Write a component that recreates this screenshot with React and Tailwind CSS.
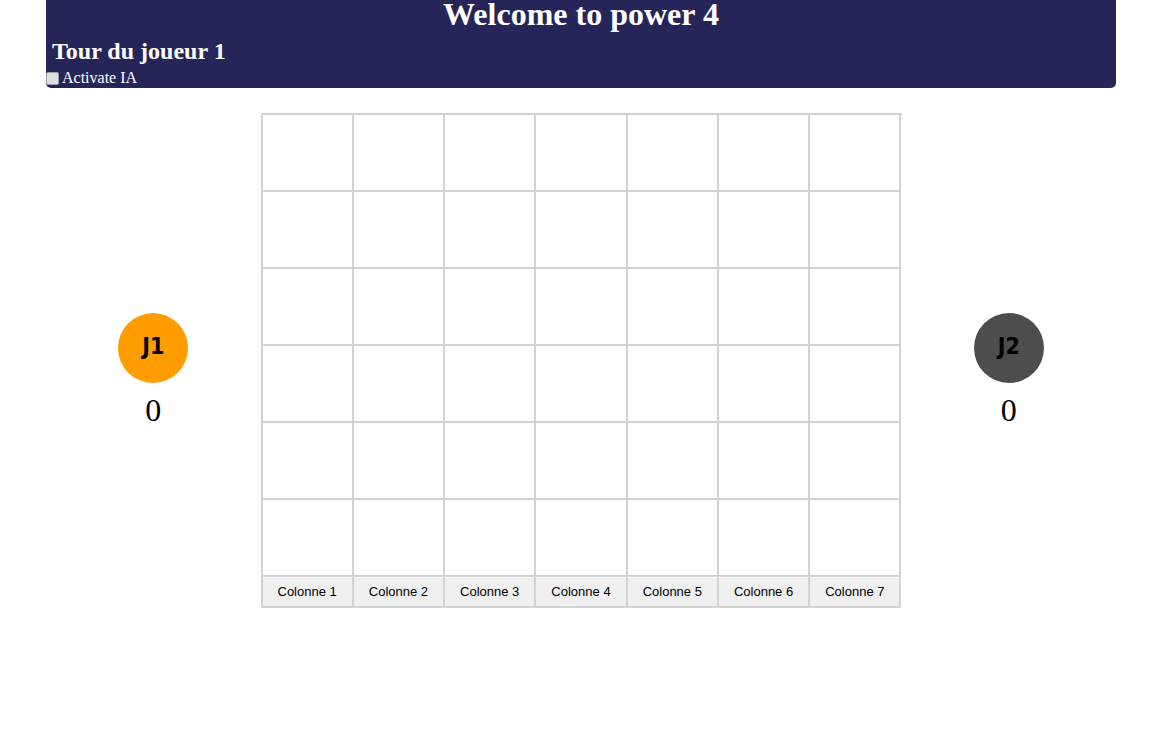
import React from "react";

const rows = 6;
const cols = 7;

function Player({ label, color }) {
  return (
    <div className="mt-[200px] flex w-[70px] flex-col items-center">
      <div
        className={`flex h-[70px] w-[70px] items-center justify-center rounded-full ${color} text-[23px] font-bold text-black`}
        style={{ fontFamily: "'DejaVu Sans Condensed', 'DejaVu Sans', sans-serif" }}
      >
        <span className="-mt-[4px] leading-none">{label}</span>
      </div>
      <div
        className="mt-[9px] text-[32px] leading-[normal] text-black"
        style={{ fontFamily: "'Liberation Serif', serif" }}
      >
        0
      </div>
    </div>
  );
}

export default function App() {
  return (
    <div className="min-h-[749px] w-full bg-white" style={{ fontFamily: "'Liberation Serif', serif" }}>
      <header className="ml-[46px] h-[88px] w-[1070px] rounded-b-[5px] bg-[#25255a] text-white">
        <h1 className="text-center text-[32px] font-bold leading-[28px]">Welcome to power 4</h1>
        <h2 className="mt-[11px] pl-[6px] text-[24px] font-bold leading-[24px]">Tour du joueur 1</h2>
        <label className="mt-[7px] flex items-center text-[16px] leading-[16px]">
          <input
            type="checkbox"
            className="m-0 mr-[3px] h-[13px] w-[13px] appearance-none rounded-[2px] border border-[#a0a0a0] bg-[#dedede]"
          />
          <span>Activate IA</span>
        </label>
      </header>

      <main className="ml-[46px] mt-[25px] flex w-[1070px] items-start justify-evenly">
        <Player label="J1" color="bg-[#ff9c00]" />

        <div className="w-[641px] shrink-0">
          <div className="grid grid-cols-7 border-l-2 border-t-2 border-[#d3d3d3]">
            {Array.from({ length: rows * cols }).map((_, i) => (
              <div key={i} className="h-[77px] border-b-2 border-r-2 border-[#d3d3d3] bg-white" />
            ))}
          </div>
          <div className="grid grid-cols-7 border-l-2 border-[#d3d3d3]">
            {Array.from({ length: cols }).map((_, i) => (
              <div key={i} className="h-[31px] border-b-2 border-r-2 border-[#d3d3d3] pt-[1px]">
                <button
                  className="h-full w-full bg-[#efefef] text-[13px] text-black"
                  style={{ fontFamily: "'Liberation Sans', Arial, sans-serif" }}
                >
                  Colonne {i + 1}
                </button>
              </div>
            ))}
          </div>
        </div>

        <Player label="J2" color="bg-[#4d4d4d]" />
      </main>
    </div>
  );
}
